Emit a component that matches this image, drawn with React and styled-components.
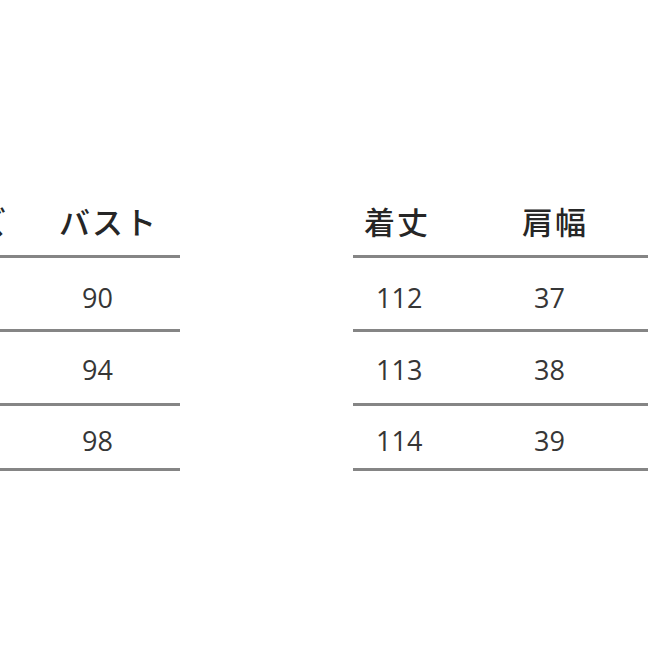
import React from 'react'
import styled, { createGlobalStyle } from 'styled-components'

const GlobalStyle = createGlobalStyle`
  html, body {
    margin: 0;
    padding: 0;
    background: #ffffff;
  }
`

const Page = styled.div`
  width: 648px;
  height: 648px;
  overflow: hidden;
  background: #ffffff;
  padding-top: 192px;
  box-sizing: border-box;
`

const Tables = styled.div`
  display: flex;
  align-items: flex-start;
`

const Table = styled.div`
  display: flex;
  flex-direction: column;
  flex: none;
  width: ${p => p.$width}px;
  margin-left: ${p => p.$offset}px;
`

const Row = styled.div`
  display: grid;
  grid-template-columns: ${p => p.$cols};
  align-items: center;
  height: ${p => p.$h}px;
  padding-top: ${p => p.$pt || 0}px;
  padding-bottom: ${p => p.$pb || 0}px;
  box-sizing: border-box;
  border-bottom: 3px solid #858585;
`

const Head = styled.div`
  font-family: "Noto Sans CJK JP", "Noto Sans", sans-serif;
  font-size: 31px;
  font-weight: 500;
  line-height: 1;
  letter-spacing: 2px;
  color: #262626;
  white-space: nowrap;
  padding-left: ${p => p.$pad || 0}px;
  text-align: ${p => p.$align || 'left'};
`

const Cell = styled.div`
  font-family: "Open Sans", "Noto Sans", sans-serif;
  font-size: 27px;
  line-height: 1;
  color: #363636;
  white-space: nowrap;
  padding-left: ${p => p.$pad || 0}px;
`

const rows = [
  { id: 1, bust: '90', length: '112', shoulder: '37', h: 74, pt: 7 },
  { id: 2, bust: '94', length: '113', shoulder: '38', h: 74, pt: 3 },
  { id: 3, bust: '98', length: '114', shoulder: '39', h: 65, pt: 7 },
]

const leftCols = '128px 172px'
const rightCols = '158px 158px 164px'

export default function App() {
  return (
    <>
      <GlobalStyle />
      <Page>
        <Tables>
          <Table $width={300} $offset={-120}>
            <Row $cols={leftCols} $h={66} $pb={6}>
              <Head $align="right">サイズ</Head>
              <Head $pad={51}>バスト</Head>
            </Row>
            {rows.map(r => (
              <Row key={r.id} $cols={leftCols} $h={r.h} $pt={r.pt}>
                <Cell />
                <Cell $pad={74}>{r.bust}</Cell>
              </Row>
            ))}
          </Table>
          <Table $width={480} $offset={173}>
            <Row $cols={rightCols} $h={66} $pb={6}>
              <Head $pad={11}>着丈</Head>
              <Head $pad={11}>肩幅</Head>
              <Head />
            </Row>
            {rows.map(r => (
              <Row key={r.id} $cols={rightCols} $h={r.h} $pt={r.pt}>
                <Cell $pad={23}>{r.length}</Cell>
                <Cell $pad={23}>{r.shoulder}</Cell>
                <Cell />
              </Row>
            ))}
          </Table>
        </Tables>
      </Page>
    </>
  )
}
